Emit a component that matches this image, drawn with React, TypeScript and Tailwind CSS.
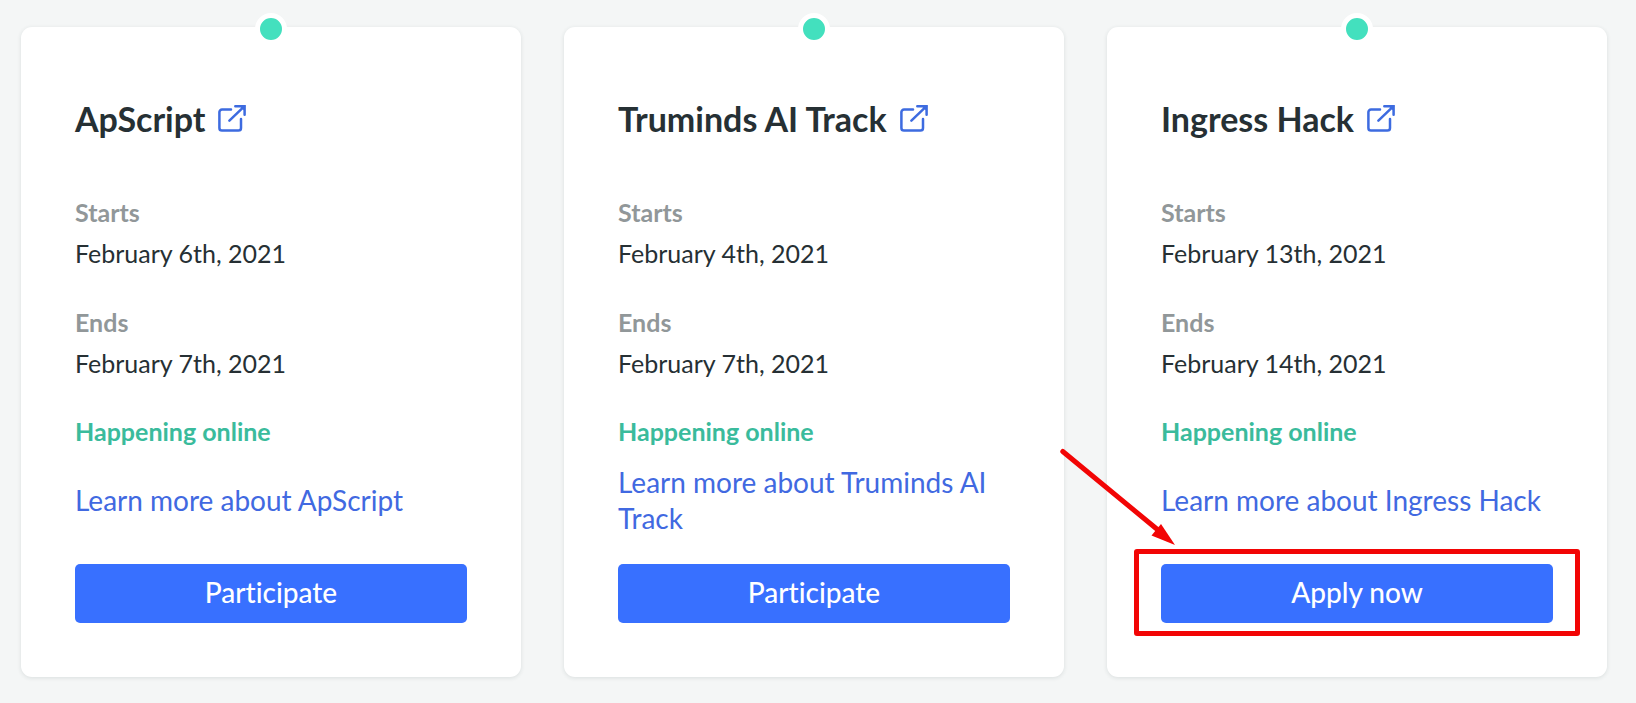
type Track = {
  name: string;
  starts: string;
  ends: string;
  action: string;
  highlighted?: boolean;
};

const tracks: Track[] = [
  { name: "ApScript", starts: "February 6th, 2021", ends: "February 7th, 2021", action: "Participate" },
  { name: "Truminds AI Track", starts: "February 4th, 2021", ends: "February 7th, 2021", action: "Participate" },
  { name: "Ingress Hack", starts: "February 13th, 2021", ends: "February 14th, 2021", action: "Apply now", highlighted: true },
];

function ExternalIcon() {
  return (
    <svg viewBox="0 0 28 28" className="size-7 shrink-0" fill="none" stroke="#3d6be0" strokeWidth="2.5" strokeLinecap="round" strokeLinejoin="round" aria-hidden="true">
      <path d="M13 4.500H4A2.600 2.600 0 0 0 1.400 7.100V23A2.600 2.600 0 0 0 4 25.600H20.400A2.600 2.600 0 0 0 23 23V14" />
      <path d="M11.400 15.600L26 1.600" />
      <path d="M17.300 1.300H26.600V9.800" strokeLinejoin="miter" />
      <path d="M21.600 1.300H26.600V6Z" fill="#3d6be0" stroke="none" />
    </svg>
  );
}

function Highlight() {
  return (
    <>
      <span className="pointer-events-none absolute -inset-x-[27px] -top-[15px] -bottom-[13px] rounded-[3px] border-5 border-[#f20505]" />
      <svg viewBox="0 0 120 102" className="pointer-events-none absolute -top-[117px] -left-[102px] h-[102px] w-[120px]" aria-hidden="true">
        <path d="M3.8 4.5L99 83" stroke="#f20505" strokeWidth="5" strokeLinecap="round" />
        <path d="M116 98L102 77L92.500 88.500Z" fill="#f20505" />
      </svg>
    </>
  );
}

function DateEntry({ label, value }: { label: string; value: string }) {
  return (
    <div>
      <dt className="text-[25px] leading-[41px] font-bold text-[#919799]">{label}</dt>
      <dd className="text-[25px] leading-10 text-[#263034]">{value}</dd>
    </div>
  );
}

function TrackCard({ track }: { track: Track }) {
  return (
    <article className="relative flex flex-col rounded-[11px] bg-white px-[54px] pt-[72px] pb-[54px] shadow-[0_1px_4px_rgba(30,60,60,0.12)]">
      <span className="absolute -top-[14px] left-1/2 size-8 -translate-x-1/2 rounded-full border-5 border-white bg-[#43e0be]" />
      <h2 className="flex items-center gap-[13px] text-[34px] leading-10 font-bold text-[#263034]">
        {track.name}
        <a href="#site" aria-label={`Open ${track.name} website`}>
          <ExternalIcon />
        </a>
      </h2>
      <dl className="mt-[53px] flex flex-col gap-[29px]">
        <DateEntry label="Starts" value={track.starts} />
        <DateEntry label="Ends" value={track.ends} />
      </dl>
      <p className="mt-7 text-[25px] leading-10 font-bold text-[#3abb9c]">Happening online</p>
      <div className="mt-[13px] flex min-h-[72px] items-center">
        <a href="#details" className="text-[28px] leading-9 text-[#4169e1]">
          {`Learn more about ${track.name}`}
        </a>
      </div>
      <div className="relative mt-7">
        <button type="button" className="h-[59px] w-full rounded-[5px] bg-[#3870ff] pb-[3px] text-[28px] font-medium text-white">
          {track.action}
        </button>
        {track.highlighted && <Highlight />}
      </div>
    </article>
  );
}

export default function App() {
  return (
    <main className="min-h-screen bg-[#f4f6f6] pt-[27px] pr-[29px] pb-[26px] pl-[21px] font-['Lato','Open_Sans',sans-serif] [font-variant-ligatures:none]">
      <div className="grid grid-cols-3 gap-[43px]">
        {tracks.map((track) => (
          <TrackCard key={track.name} track={track} />
        ))}
      </div>
    </main>
  );
}
